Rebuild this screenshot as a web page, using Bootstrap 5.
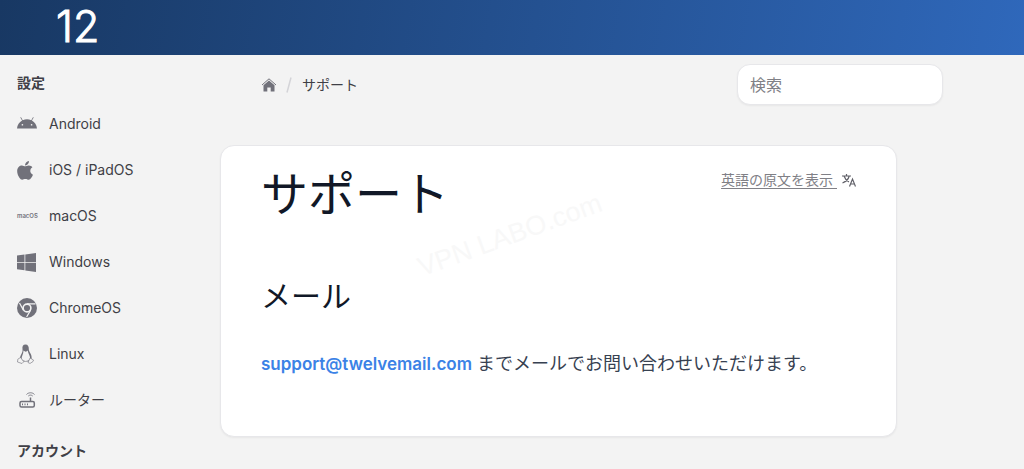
<!DOCTYPE html>
<html lang="ja">
<head>
<meta charset="utf-8">
<meta name="viewport" content="width=device-width, initial-scale=1">
<title>サポート</title>
<link href="https://cdn.jsdelivr.net/npm/bootstrap@5.3.0/dist/css/bootstrap.min.css" rel="stylesheet">
<style>
body { background: #f3f3f3; color: #3f3f46; font-family: Inter, "Noto Sans CJK JP", sans-serif; font-size: 14px; line-height: 20px; }
.site-header { height: 55px; background: linear-gradient(100deg, #183863, #2f68bb); padding-left: 56px; }
.brand { color: #fff; font-size: 43px; line-height: 52px; font-weight: 300; -webkit-text-stroke: 1px #fff; }
.side { width: 220px; padding: 18px 17px 0; }
.side-title { font-size: 14px; line-height: 20px; font-weight: 700; margin: 0 0 8px; }
.side a { color: #3f3f46; height: 46px; gap: 12px; }
.side ul { margin-bottom: 18px; }
.side-icon { width: 20px; height: 20px; color: #71717a; }
.os-word { font-size: 6px; line-height: 20px; font-weight: 600; }
.topbar { padding: 9px 0 0 42px; margin-right: 81px; }
.crumbs { gap: 10px; }
.crumbs a { color: #71717a; }
.crumbs .slash { color: #d4d4d8; }
.search { width: 206px; height: 41px; border: 1px solid #e7e7ea; border-radius: 13px; padding: 0 12px; font-size: 16px; color: #3f3f46; box-shadow: 0 1px 2px rgba(0,0,0,.05); }
.search::placeholder { color: #808086; }
.panel { margin: 40px 127px 32px 0; min-height: 292px; padding: 16px 40px 56px; background: #fff; border: 1px solid #e7e7ea; border-radius: 14px; box-shadow: 0 1px 2px rgba(0,0,0,.05); }
.panel h1 { font-size: 47px; line-height: 64px; font-weight: 400; color: #111827; margin: 0; }
.panel h2 { font-size: 30px; line-height: 40px; font-weight: 400; color: #111827; margin: 50px 0 34px; }
.panel p { font-size: 18px; line-height: 28px; color: #374151; margin: 0; }
.mail { color: #3b82e6; font-size: 17px; font-weight: 600; text-decoration: none; }
.original { color: #808086; margin-top: 8px; gap: 5px; text-underline-offset: 3px; }
.watermark { left: 192px; top: 73px; font-family: "Liberation Sans", sans-serif; font-size: 27px; line-height: 32px; color: #f8f8f8; transform: rotate(-20deg); }
</style>
</head>
<body>
<header class="site-header"><a class="brand text-decoration-none" href="#">12</a></header>
<div class="d-flex">
  <nav class="side flex-shrink-0" aria-label="設定">
    <h2 class="side-title">設定</h2>
    <ul class="list-unstyled">
      <li><a class="d-flex align-items-center text-decoration-none" href="#"><svg class="side-icon" viewBox="0 0 576 512" fill="currentColor"><path d="M420.55,301.93a24,24,0,1,1,24-24,24,24,0,0,1-24,24m-265.1,0a24,24,0,1,1,24-24,24,24,0,0,1-24,24m273.7-144.48,47.94-83a10,10,0,1,0-17.27-10h0l-48.54,84.07a301.25,301.25,0,0,0-246.56,0L116.18,64.45a10,10,0,1,0-17.27,10h0l47.94,83C64.53,202.22,8.24,285.55,0,384H576c-8.24-98.45-64.54-181.78-146.85-226.55"/></svg>Android</a></li>
      <li><a class="d-flex align-items-center text-decoration-none" href="#"><svg class="side-icon" viewBox="0 0 512 512" fill="currentColor"><path transform="translate(0 -10) scale(1.070)" d="M318.7 268.7c-.2-36.7 16.4-64.4 50-84.8-18.8-26.9-47.2-41.7-84.7-44.6-35.5-2.8-74.3 20.7-88.5 20.7-15 0-49.4-19.7-76.4-19.7C63.3 141.2 4 184.8 4 273.5q0 39.3 14.4 81.2c12.8 36.7 59 126.7 107.2 125.2 25.2-.6 43-17.9 75.8-17.9 31.8 0 48.3 17.9 76.4 17.9 48.6-.7 90.4-82.5 102.6-119.3-65.2-30.7-61.7-90-61.7-91.9zm-56.6-164.2c27.3-32.4 24.8-61.9 24-72.5-24.1 1.4-52 16.4-67.9 34.9-17.5 19.8-27.8 44.3-25.6 71.9 26.1 2 49.9-11.4 69.5-34.3z"/></svg>iOS / iPadOS</a></li>
      <li><a class="d-flex align-items-center text-decoration-none" href="#"><span class="side-icon os-word">macOS</span>macOS</a></li>
      <li><a class="d-flex align-items-center text-decoration-none" href="#"><svg class="side-icon" viewBox="0 0 20 20" fill="currentColor"><path d="M0 3.500 7.500 2.500V10H0zM8.300 2.400 19 1V10H8.300zM0 10.800H7.500V18.300L0 17.300zM8.300 10.800H19V20L8.300 18.500z"/></svg>Windows</a></li>
      <li><a class="d-flex align-items-center text-decoration-none" href="#"><svg class="side-icon" viewBox="0 0 20 20"><circle cx="10" cy="10" r="10" fill="currentColor"/><circle cx="10" cy="10" r="3.900" fill="none" stroke="#f3f3f3" stroke-width="1.600"/><path d="M10 5.800H18.500M6.400 12.100 2.500 5M13.600 12.100 9.600 19" stroke="#f3f3f3" stroke-width="1.200"/></svg>ChromeOS</a></li>
      <li><a class="d-flex align-items-center text-decoration-none" href="#"><svg class="side-icon" viewBox="0 0 20 20" fill="none" stroke="currentColor"><path d="M5.500 5.500C5 2 6 .5 8.500.5s3.500 2 3.300 5c.2 2.500 3.400 5 2.800 9l-2 3H5.500L3 14c.3-3.500 3-5 2.500-8.500z" fill="currentColor" stroke="none"/><path d="M6.500 6.500c1.500 1.500 3 1.500 4.300 0 .3 3.500 2.700 5 2.200 8.500-1 2.500-7.500 2.500-8.500 0C4.500 12 6.500 10 6.500 6.500z" fill="#f3f3f3" stroke="none"/><path d="M3.500 13.500.8 15.200.5 18l4.500 1.500 1.800-1.800zM13 14l3.500 2-.5 1.500-3 2-2-1z" fill="#f3f3f3" stroke-width=".6"/></svg>Linux</a></li>
      <li><a class="d-flex align-items-center text-decoration-none" href="#"><svg class="side-icon" viewBox="0 0 20 20" fill="none" stroke="currentColor"><rect x="3" y="11.500" width="14.300" height="5.500" rx="1.500" stroke-width="1.500"/><path d="M13.500 11.500V7.500" stroke-width="1.500"/><path d="M5 14.300h1M7.500 14.300h1M10 14.300h1" stroke-width="1.700"/><path d="M9.500 4.500c2-2.300 6-2.300 8 0M11.300 6c1.200-1.200 3.200-1.200 4.400 0" stroke-width=".9"/></svg>ルーター</a></li>
    </ul>
    <h2 class="side-title">アカウント</h2>
  </nav>
  <main class="flex-grow-1">
    <div class="topbar d-flex justify-content-between align-items-center">
      <nav class="crumbs d-flex align-items-center" aria-label="パンくず">
        <a href="#" aria-label="ホーム" class="d-flex"><svg width="14" height="14" viewBox="0 0 14 14"><path d="M0 7 7 .8 14 7" fill="none" stroke="currentColor"/><path d="M1.500 7.300 7 2.500l5.500 4.800V13.500H8.700V9.500H5.300v4H1.500z" fill="currentColor"/></svg></a>
        <svg class="slash" width="6" height="16" viewBox="0 0 6 16" stroke="currentColor" stroke-width="1.500"><path d="M1 15.500 5 .5"/></svg>
        <span>サポート</span>
      </nav>
      <input class="search" type="search" placeholder="検索" aria-label="検索">
    </div>
    <article class="panel position-relative">
      <span class="watermark position-absolute" aria-hidden="true">VPN LABO.com</span>
      <div class="d-flex justify-content-between align-items-start">
        <h1>サポート</h1>
        <a href="#" class="original d-flex align-items-center text-decoration-none"><span class="text-decoration-underline">英語の原文を表示&nbsp;</span><svg width="14" height="14" viewBox="0 0 14 14" fill="none" stroke="#606068" stroke-width="1.200"><path d="M0 3H9M4.500 1V3M7.200 3C6.500 6 4 8.500.5 10M2 3C3 6 5 8 7 9M7.500 13.500 10.500 6 13.500 13.500M8.500 11H12.500"/></svg></a>
      </div>
      <h2>メール</h2>
      <p><a class="mail" href="mailto:support@twelvemail.com">support@twelvemail.com</a> までメールでお問い合わせいただけます。</p>
    </article>
  </main>
</div>
<script src="https://cdn.jsdelivr.net/npm/bootstrap@5.3.0/dist/js/bootstrap.bundle.min.js"></script>
</body>
</html>
